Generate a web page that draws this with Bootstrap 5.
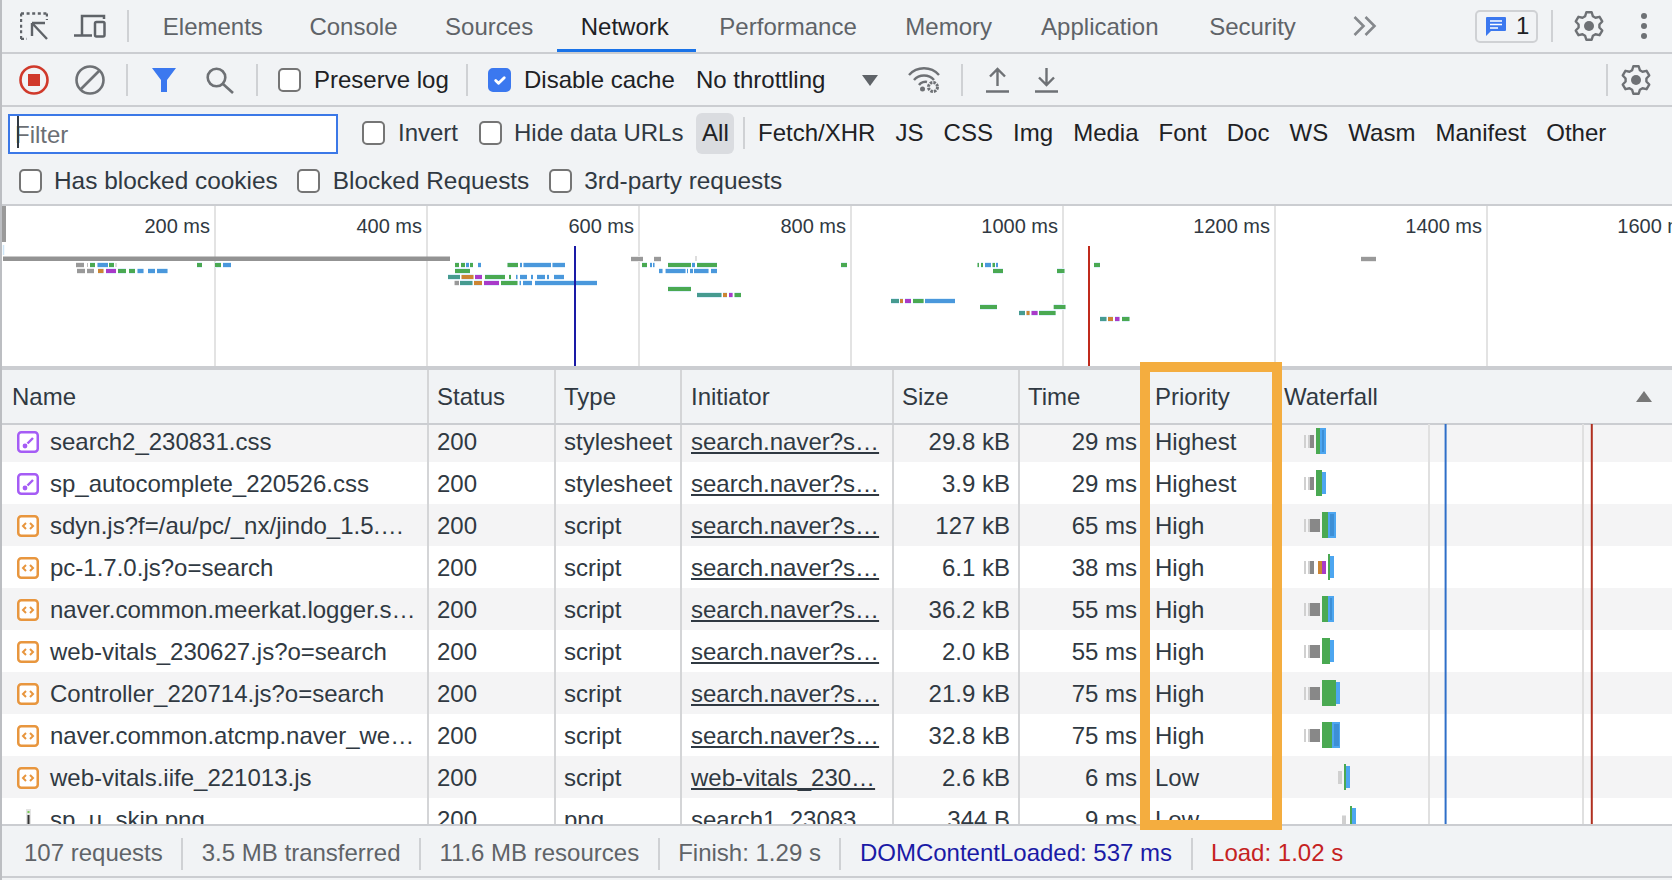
<!doctype html>
<html lang="en">
<head>
<meta charset="utf-8">
<title>Network</title>
<link href="https://cdn.jsdelivr.net/npm/bootstrap@5.3.0/dist/css/bootstrap.min.css" rel="stylesheet">
<style>
html,body{margin:0;background:#f1f3f5;overflow:hidden}
.dt-root{width:1672px;height:880px;border-left:2px solid #bcbec2;background:#f1f3f5;font-family:"Liberation Sans",Arial,sans-serif;font-size:24px;color:#303942;line-height:1.2;white-space:nowrap}
.bar-main{height:54px;border-bottom:2px solid #cbcdd1}
.bar-tools{height:53px;border-bottom:2px solid #cbcdd1;padding-top:1px}
.bar-filter{height:99px;border-bottom:2px solid #cbcdd1}
.vsep{width:2px;height:32px;background:#cfd1d4;flex:none}
.tab-list{color:#5f6368;font-size:24px}
.tab-item{padding:2px 23.800px 0;height:52px;display:flex;align-items:center;position:relative}
.tab-first{padding-left:24.800px;padding-right:22.800px}
.tab-on{color:#202124;padding-right:26.800px}
.tab-on::after{content:"";position:absolute;left:0;right:0;bottom:0;height:3px;background:#1a73e8}
.tab-p1{padding-right:24.800px}
.tab-p2{padding-right:25.300px}
.tab-p3{padding-right:26.800px}
.msg-pill{width:63px;height:33px;border:2px solid #cfd1d4;border-radius:5px;color:#202124}
.ck.form-check-input{width:23px;height:24px;margin-top:0;border:2px solid #757575;border-radius:5px;background-color:#fff;flex:none}
.ck.form-check-input:checked{background-color:#3b78ef;border-color:#3b78ef}
.txt-dark{color:#202124}
.find-box{width:330px;height:40px;margin:2px 0 0 6px;border:2px solid #3b78e7;background:#fff;border-radius:0;padding:2px 0 0 5px;font-size:24px;color:#303942;box-shadow:none;line-height:1}
.find-box::placeholder{color:#6b6f74}
.caret-mark{position:absolute;left:15px;top:116px;width:2px;height:32px;background:#303942}
.kind-pill{width:38px;height:41px;border-radius:6px;background:#dadce0}
.kind-item{padding:0 10.050px}
.row-second{height:46px;font-size:24.400px}
.ov-wrap{height:160px;background:#fff}
.ov-cell{flex:none;width:212px;height:160px;border-right:2px solid #e3e3e3;text-align:right;padding:8px 4px 0 0;font-size:20px;color:#303942;line-height:1.2}
.ov-cell:first-child{width:214px}
.ov-rule{height:4px;background:#cbcdd1}
.canvas-art{position:absolute;left:0;top:0;pointer-events:none}
.table-wrap{height:454px;background:#fff}
.table.netgrid{--bs-table-bg:#fff;--bs-table-color:#303942;--bs-table-striped-bg:#f4f4f5;--bs-table-striped-color:#303942;table-layout:fixed;width:1670px;margin:0;font-size:24px;line-height:1.2}
.table.netgrid>:not(caption)>*>*{padding:3px 8px 0;height:42px;border-style:solid;border-width:0 2px 0 0;border-color:#d4d5d7;vertical-align:middle;white-space:nowrap;overflow:hidden;font-weight:400}
.table.netgrid>:not(caption)>*>*:nth-child(4){padding-left:9px}
.table.netgrid>thead>tr>th{height:54px;background:#f1f3f5;box-shadow:none;border-bottom:2px solid #cbcdd1;padding-top:2px}
.table.netgrid>thead>tr>th:first-child{padding-left:10px}
.table.netgrid>thead>tr>th:last-child{padding-left:10px}
.table.netgrid>tbody>tr:first-child>td{height:38px;padding-top:0;padding-bottom:3px}
.table.netgrid>*>*>*:last-child{border-right:0}
.netgrid a{color:#303942}
.name-flex{display:flex;align-items:center;gap:11px;margin-left:7px}
.name-flex svg{flex:none}
.status-bar{height:54px;border-top:2px solid #cbcdd1;border-bottom:2px solid #cbcdd1;color:#5f6368;padding-top:5px}
.st-cell{padding:0 18.500px}
.st-sep{width:2px;height:32px;background:#cfd1d4;flex:none}
.st-blue{color:#1a1aa6}
.st-red{color:#c5221f}
.focus-frame{position:absolute;left:1138px;top:362px;width:142px;height:468px;border:10px solid #f4ad3f;pointer-events:none}
.m12{margin-left:12px}.m13{margin-left:13px}.m16{margin-left:16px}.m18{margin-left:18px}.m17{margin-left:17px}.m19{margin-left:19px}.m20{margin-left:20px}.m21{margin-left:21px}.m22{margin-left:22px}.m23{margin-left:23px}.m24{margin-left:24px}.m26{margin-left:26px}.m30{margin-left:30px}.m33{margin-left:33px}
.w-a{width:132px}.w-b{width:152px}.w-c{width:133px}
</style>
</head>
<body>
<svg class="d-none">
<symbol id="gear" viewBox="0 0 30 30"><path d="M11.07 5.27 12.33 1.26H17.67L18.93 5.27 21.46 6.73 25.57 5.82 28.24 10.44 25.4 13.54V16.46L28.24 19.56 25.57 24.18 21.46 23.27 18.93 24.73 17.67 28.74H12.33L11.07 24.73 8.54 23.27 4.43 24.18 1.76 19.56 4.6 16.46V13.54L1.76 10.44 4.43 5.82 8.54 6.73Z" fill="none" stroke="#6e7175" stroke-width="2.4" stroke-linejoin="round"/><circle cx="15" cy="15" r="5" fill="#6e7175"/></symbol>
<symbol id="ic-css" viewBox="0 0 22 22"><rect x="1.25" y="1.25" width="19.5" height="19.5" rx="3" fill="#fff" stroke="#a55cf5" stroke-width="2.5"/><path d="M10.5 12.5 16 7" stroke="#a55cf5" stroke-width="2.4" fill="none"/><circle cx="8" cy="15" r="2.4" fill="#a55cf5"/></symbol>
<symbol id="ic-js" viewBox="0 0 22 22"><rect x="1.25" y="1.25" width="19.5" height="19.5" rx="3" fill="#fff" stroke="#e8963e" stroke-width="2.5"/><path d="M9 8 6 11 9 14M13 8 16 11 13 14" stroke="#e8963e" stroke-width="2" fill="none"/></symbol>
</svg>

<div class="dt-root position-relative overflow-hidden">

  <div class="bar-main d-flex align-items-center">
    <svg class="m18" width="28" height="28" viewBox="0 0 28 28" fill="none" stroke="#5f6368" stroke-width="2.4"><path d="M1 1.5H27M1 1.5V27M27 1.5V8M1 27H7" stroke-dasharray="3 2.6"/><path d="M12 11V24M12 11H25M12 11 27 27"/></svg>
    <svg class="m26" width="32" height="24" viewBox="0 0 32 24" fill="none" stroke="#5f6368" stroke-width="2.5"><path d="M8 21V2H30V5M0 21.5H18"/><rect x="21" y="8" width="9.5" height="14.5" rx="1.5"/></svg>
    <span class="vsep m21"></span>
    <ul class="nav tab-list flex-nowrap" style="margin-left:9px">
      <li class="tab-item tab-first">Elements</li>
      <li class="tab-item">Console</li>
      <li class="tab-item">Sources</li>
      <li class="tab-item tab-on">Network</li>
      <li class="tab-item tab-p1">Performance</li>
      <li class="tab-item tab-p2">Memory</li>
      <li class="tab-item tab-p3">Application</li>
      <li class="tab-item">Security</li>
    </ul>
    <svg class="m33" width="24" height="20" viewBox="0 0 24 20" fill="none" stroke="#85888c" stroke-width="2.6"><path d="M1.5 1 10.5 10 1.5 19M12.5 1 21.5 10 12.5 19"/></svg>
    <div class="ms-auto d-flex align-items-center" style="margin-right:25px">
      <div class="msg-pill d-flex align-items-center">
        <svg style="margin-left:9px" width="20" height="19" viewBox="0 0 20 19"><path d="M1 0H19Q20 0 20 1V13Q20 14 19 14H5L0 19V1Q0 0 1 0Z" fill="#3b78ef"/><path d="M4 4H16M4 7.5H16M4 11H12" stroke="#fff" stroke-width="1.6"/></svg>
        <span style="margin-left:10px">1</span>
      </div>
      <span class="vsep m13"></span>
      <svg class="m21" width="30" height="30"><use href="#gear"/></svg>
      <svg style="margin-left:37px" width="6" height="26" viewBox="0 0 6 26" fill="#6e7175"><circle cx="3" cy="3" r="3"/><circle cx="3" cy="13" r="3"/><circle cx="3" cy="23" r="3"/></svg>
    </div>
  </div>

  <div class="bar-tools d-flex align-items-center">
    <svg class="m17" width="30" height="30" viewBox="0 0 30 30"><circle cx="15" cy="15" r="13.5" fill="none" stroke="#d0392b" stroke-width="2.6"/><rect x="9" y="9" width="12" height="12" fill="#d0392b"/></svg>
    <svg class="m26" width="30" height="30" viewBox="0 0 30 30" fill="none" stroke="#6e7175" stroke-width="2.6"><circle cx="15" cy="15" r="13.5"/><path d="M6 24 24 6"/></svg>
    <span class="vsep m21"></span>
    <svg class="m24" width="24" height="24" viewBox="0 0 24 24" fill="#3b78ef"><path d="M0 0H24L15 12V24H9V12Z"/></svg>
    <svg class="m30" width="28" height="27" viewBox="0 0 28 27" fill="none" stroke="#6e7175" stroke-width="2.6"><circle cx="10.5" cy="10.5" r="8.8"/><path d="M17 17 27 26"/></svg>
    <span class="vsep m22"></span>
    <input class="form-check-input ck m20" type="checkbox" aria-label="Preserve log">
    <span class="m13 w-a txt-dark">Preserve log</span>
    <span class="vsep m20"></span>
    <input class="form-check-input ck m20" type="checkbox" checked aria-label="Disable cache">
    <span class="m13 w-b txt-dark">Disable cache</span>
    <span class="m20 w-c txt-dark">No throttling</span>
    <svg class="m33" width="16" height="11" viewBox="0 0 16 11" fill="#5f6368"><path d="M0 0H16L8 11Z"/></svg>
    <svg class="m30" width="33" height="28" viewBox="0 0 33 28" fill="none" stroke="#6e7175" stroke-width="2.4"><path d="M1 9C9 0 23 0 31 9M6 14C11 8 21 8 26 14M11 19C13 16 17 15.500 19 16"/><circle cx="14.500" cy="23" r="2.500" fill="#6e7175" stroke="none"/><circle cx="25" cy="21" r="4.500" stroke-width="3" stroke-dasharray="2.500 1"/></svg>
    <span class="vsep m20"></span>
    <svg class="m23" width="23" height="26" viewBox="0 0 23 26" fill="none" stroke="#6e7175" stroke-width="2.4"><path d="M11.500 19V2M4 9.500 11.500 2 19 9.500M0 24.500H23"/></svg>
    <svg class="m26" width="23" height="26" viewBox="0 0 23 26" fill="none" stroke="#6e7175" stroke-width="2.4"><path d="M11.500 1V18M4 10.500 11.500 18 19 10.500M0 24.500H23"/></svg>
    <span class="vsep ms-auto"></span>
    <svg class="m13" style="margin-right:21px" width="30" height="30"><use href="#gear"/></svg>
  </div>

  <div class="bar-filter">
    <div class="d-flex align-items-center" style="height:51px;padding-top:1px">
      <input class="form-control find-box" type="text" placeholder="Filter" aria-label="Filter">
      <input class="form-check-input ck m24" type="checkbox" aria-label="Invert">
      <span class="m13">Invert</span>
      <input class="form-check-input ck m21" type="checkbox" aria-label="Hide data URLs">
      <span class="m12">Hide data URLs</span>
      <span class="kind-pill d-flex align-items-center justify-content-center txt-dark m13">All</span>
      <span class="vsep" style="margin:0 2.500px 0 9px"></span>
      <span class="kind-item txt-dark">Fetch/XHR</span>
      <span class="kind-item txt-dark">JS</span>
      <span class="kind-item txt-dark">CSS</span>
      <span class="kind-item txt-dark">Img</span>
      <span class="kind-item txt-dark">Media</span>
      <span class="kind-item txt-dark">Font</span>
      <span class="kind-item txt-dark">Doc</span>
      <span class="kind-item txt-dark">WS</span>
      <span class="kind-item txt-dark">Wasm</span>
      <span class="kind-item txt-dark">Manifest</span>
      <span class="kind-item txt-dark">Other</span>
    </div>
    <div class="d-flex align-items-center row-second">
      <input class="form-check-input ck m17" type="checkbox" aria-label="Has blocked cookies">
      <span class="m12">Has blocked cookies</span>
      <input class="form-check-input ck m19" type="checkbox" aria-label="Blocked Requests">
      <span class="m13">Blocked Requests</span>
      <input class="form-check-input ck m20" type="checkbox" aria-label="3rd-party requests">
      <span class="m12">3rd-party requests</span>
    </div>
  </div>
  <span class="caret-mark"></span>

  <div class="ov-wrap position-relative overflow-hidden">
    <div class="d-flex">
      <div class="ov-cell">200 ms</div><div class="ov-cell">400 ms</div><div class="ov-cell">600 ms</div><div class="ov-cell">800 ms</div><div class="ov-cell">1000 ms</div><div class="ov-cell">1200 ms</div><div class="ov-cell">1400 ms</div><div class="ov-cell">1600 ms</div>
    </div>
    <svg class="canvas-art" width="1670" height="160" viewBox="2 206 1670 160" fill="none">
      <defs>
        <path id="oG" d="M90 265H95M109 265H114M197 265H202M215 265H221M455 265H459M461 265H465M470 265H473M507.500 265H518M642 265H647M668 265H691M697 265H717M841 265H847M977.500 265H979M981 265H983M992.500 265H995M1094 265H1100M118 271H126M129 271H135M455 271H470M993 271H1003M1057 271H1064.500M485 277H505M509 277H511M501 283H517.500M668 289H691M734.500 295H741M913 301H923.600M980 307H997M1053.700 307H1065.500M1039 313H1055.600M1122 319H1129.500"/>
        <path id="oB" d="M97.500 265H108M223 265H231M466 265H469M478 265H481M520 265H522M523.500 265H551M552.500 265H565M650 265H652M653 265H654.500M692 265H695M985 265H991M996 265H998M137.500 271H143.500M148 271H155M157 271H167.500M659 271H662.500M665.600 271H685.500M687 271H688M690 271H693M694 271H708.500M711 271H717M516 277H517.500M520 277H527M531 277H533M537 277H545M547 277H549M554 277H564M519.600 283H521M523 283H532M535 283H597M925 301H955"/>
        <path id="oA" d="M76 265H84M77 271H85M87 271H94M454.600 283H459M631 259H643M654 259H661M1361 259H1376"/>
        <path id="oT" d="M448 277H460M460 283H472.500M697 295H721.500M891 301H899M1019 313H1025M1100 319H1106.500"/>
        <path id="oO" d="M98 271H103.500M461.500 277H473.500M474 283H482M723 295H727M900 301H903M1026.500 313H1029.600M1108 319H1113"/>
        <path id="oP" d="M106 271H116M475 277H482M484 283H499M729 295H732.600M905 301H911M1031.500 313H1037.600M1115 319H1119.500"/>
      </defs>
      <g stroke="#e0f0fb" stroke-width="6"><use href="#oG"/><use href="#oB"/><use href="#oT"/><use href="#oO"/><use href="#oP"/></g>
      <use href="#oA" stroke="#ececec" stroke-width="6"/>
      <path d="M4 206V242" stroke="#9a9a9a" stroke-width="4"/>
      <path d="M3.500 245V255" stroke="#cfe6f7" stroke-width="1.500"/>
      <path d="M3 258.800H450" stroke="#939393" stroke-width="4.500"/>
      <path d="M87.500 263V267M116 263V267M696 256V261" stroke="#bbb" stroke-width="1"/>
      <use href="#oG" stroke="#4aa952" stroke-width="4"/>
      <use href="#oB" stroke="#4a98dc" stroke-width="4"/>
      <use href="#oA" stroke="#999" stroke-width="4"/>
      <use href="#oT" stroke="#469b90" stroke-width="4"/>
      <use href="#oO" stroke="#cc8533" stroke-width="4"/>
      <use href="#oP" stroke="#a93ac9" stroke-width="4"/>
      <path d="M575 246V366" stroke="#1a1aa6" stroke-width="2"/>
      <path d="M1089 246V366" stroke="#c02a1c" stroke-width="2"/>
    </svg>
  </div>
  <div class="ov-rule"></div>

  <div class="table-wrap position-relative overflow-hidden">
    <table class="table table-striped netgrid">
      <colgroup>
        <col style="width:426px"><col style="width:127px"><col style="width:126px"><col style="width:212px"><col style="width:126px"><col style="width:127px"><col style="width:127px"><col>
      </colgroup>
      <thead>
        <tr><th>Name</th><th>Status</th><th>Type</th><th>Initiator</th><th>Size</th><th>Time</th><th>Priority</th><th>Waterfall</th></tr>
      </thead>
      <tbody>
        <tr><td><div class="name-flex"><svg width="22" height="22"><use href="#ic-css"/></svg><span>search2_230831.css</span></div></td><td>200</td><td>stylesheet</td><td><a href="#">search.naver?s…</a></td><td class="text-end">29.8 kB</td><td class="text-end">29 ms</td><td>Highest</td><td></td></tr>
        <tr><td><div class="name-flex"><svg width="22" height="22"><use href="#ic-css"/></svg><span>sp_autocomplete_220526.css</span></div></td><td>200</td><td>stylesheet</td><td><a href="#">search.naver?s…</a></td><td class="text-end">3.9 kB</td><td class="text-end">29 ms</td><td>Highest</td><td></td></tr>
        <tr><td><div class="name-flex"><svg width="22" height="22"><use href="#ic-js"/></svg><span>sdyn.js?f=/au/pc/_nx/jindo_1.5.…</span></div></td><td>200</td><td>script</td><td><a href="#">search.naver?s…</a></td><td class="text-end">127 kB</td><td class="text-end">65 ms</td><td>High</td><td></td></tr>
        <tr><td><div class="name-flex"><svg width="22" height="22"><use href="#ic-js"/></svg><span>pc-1.7.0.js?o=search</span></div></td><td>200</td><td>script</td><td><a href="#">search.naver?s…</a></td><td class="text-end">6.1 kB</td><td class="text-end">38 ms</td><td>High</td><td></td></tr>
        <tr><td><div class="name-flex"><svg width="22" height="22"><use href="#ic-js"/></svg><span>naver.common.meerkat.logger.s…</span></div></td><td>200</td><td>script</td><td><a href="#">search.naver?s…</a></td><td class="text-end">36.2 kB</td><td class="text-end">55 ms</td><td>High</td><td></td></tr>
        <tr><td><div class="name-flex"><svg width="22" height="22"><use href="#ic-js"/></svg><span>web-vitals_230627.js?o=search</span></div></td><td>200</td><td>script</td><td><a href="#">search.naver?s…</a></td><td class="text-end">2.0 kB</td><td class="text-end">55 ms</td><td>High</td><td></td></tr>
        <tr><td><div class="name-flex"><svg width="22" height="22"><use href="#ic-js"/></svg><span>Controller_220714.js?o=search</span></div></td><td>200</td><td>script</td><td><a href="#">search.naver?s…</a></td><td class="text-end">21.9 kB</td><td class="text-end">75 ms</td><td>High</td><td></td></tr>
        <tr><td><div class="name-flex"><svg width="22" height="22"><use href="#ic-js"/></svg><span>naver.common.atcmp.naver_we…</span></div></td><td>200</td><td>script</td><td><a href="#">search.naver?s…</a></td><td class="text-end">32.8 kB</td><td class="text-end">75 ms</td><td>High</td><td></td></tr>
        <tr><td><div class="name-flex"><svg width="22" height="22"><use href="#ic-js"/></svg><span>web-vitals.iife_221013.js</span></div></td><td>200</td><td>script</td><td><a href="#">web-vitals_230…</a></td><td class="text-end">2.6 kB</td><td class="text-end">6 ms</td><td>Low</td><td></td></tr>
        <tr><td><div class="name-flex"><svg style="margin-left:9px;margin-right:8px" width="5" height="22" viewBox="0 0 5 22"><rect width="5" height="22" fill="#e3e3e3"/><rect x="1.500" y="6" width="2" height="16" fill="#333"/><rect x="1.500" y="2" width="2" height="2" fill="#7c5"/></svg><span>sp_u_skip.png</span></div></td><td>200</td><td>png</td><td><a href="#">search1_23083…</a></td><td class="text-end">344 B</td><td class="text-end">9 ms</td><td>Low</td><td></td></tr>
      </tbody>
    </table>
    <svg class="canvas-art" width="1670" height="454" viewBox="2 370 1670 454" fill="none">
      <path d="M1429 424V824M1583 424V824" stroke="#e0e0e0" stroke-width="2"/>
      <path d="M1445.600 424V824" stroke="#2f6fc8" stroke-width="2"/>
      <path d="M1591.800 424V824" stroke="#b03020" stroke-width="2"/>
      <path d="M1636 402H1652L1644 391Z" fill="#777"/>
      <g stroke="#d0d0d0" stroke-width="13"><path d="M1304 441.500H1306M1308 441.500H1310M1304 483.500H1306M1308 483.500H1310M1304 525.500H1306M1308 525.500H1310M1304 567.500H1306M1308 567.500H1310M1304 609.500H1306M1308 609.500H1310M1304 651.500H1306M1308 651.500H1310M1304 693.500H1306M1308 693.500H1310M1304 735.500H1306M1308 735.500H1310M1338 777.500H1342M1342 822H1346"/></g>
      <g stroke="#888" stroke-width="13"><path d="M1310 441.500H1314M1310 483.500H1314M1310 525.500H1320M1310 567.500H1314M1310 609.500H1320M1310 651.500H1320M1310 693.500H1320M1310 735.500H1320"/></g>
      <path d="M1318 567.500H1322" stroke="#cc8533" stroke-width="13"/>
      <path d="M1322 567.500H1326" stroke="#a93ac9" stroke-width="13"/>
      <g stroke="#4aa952" stroke-width="26"><path d="M1316 441H1320M1316 483H1322M1322 525H1328M1328 567H1330M1322 609H1328M1322 651H1330M1322 693H1336M1322 735H1332M1344 777H1346M1350 819H1352"/></g>
      <g stroke="#4da6f0" stroke-width="26"><path d="M1320 441H1326M1328 525H1336M1328 609H1334M1332 735H1340"/></g>
      <g stroke="#4da6f0" stroke-width="22"><path d="M1322 483H1326M1330 567H1334M1330 651H1334M1336 693H1340M1346 777H1350M1352 819H1356"/></g>
      <g stroke="#3d8fd6" stroke-width="22"><path d="M1322 441H1324M1330 525H1334M1330 609H1332M1334 735H1339"/></g>
    </svg>
  </div>

  <div class="status-bar d-flex align-items-center">
    <span class="st-cell" style="padding-left:22px">107 requests</span><span class="st-sep"></span>
    <span class="st-cell">3.5 MB transferred</span><span class="st-sep"></span>
    <span class="st-cell">11.6 MB resources</span><span class="st-sep"></span>
    <span class="st-cell">Finish: 1.29 s</span><span class="st-sep"></span>
    <span class="st-cell st-blue">DOMContentLoaded: 537 ms</span><span class="st-sep"></span>
    <span class="st-cell st-red">Load: 1.02 s</span>
  </div>

  <div class="focus-frame"></div>
</div>
<script src="https://cdn.jsdelivr.net/npm/bootstrap@5.3.0/dist/js/bootstrap.bundle.min.js"></script>
</body>
</html>
